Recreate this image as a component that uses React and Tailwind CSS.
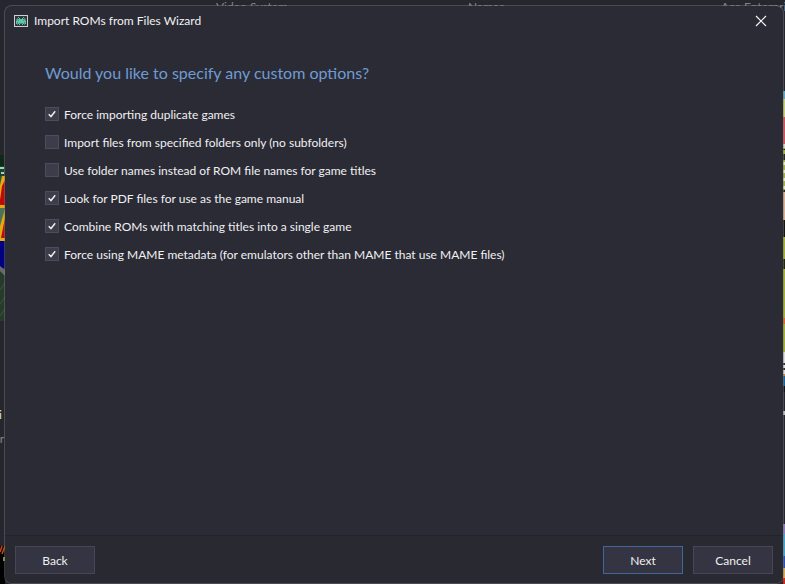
import { useState } from "react";

const OPTIONS = [
  { id: "duplicates", label: "Force importing duplicate games", on: true },
  { id: "folders", label: "Import files from specified folders only (no subfolders)", on: false },
  { id: "titles", label: "Use folder names instead of ROM file names for game titles", on: false },
  { id: "manuals", label: "Look for PDF files for use as the game manual", on: true },
  { id: "combine", label: "Combine ROMs with matching titles into a single game", on: true },
  { id: "mame", label: "Force using MAME metadata (for emulators other than MAME that use MAME files)", on: true },
];

function InvaderIcon() {
  return (
    <svg width="14" height="12" viewBox="0 0 14 12" shapeRendering="crispEdges" aria-hidden="true">
      <rect width="14" height="12" fill="#cfcfd3" />
      <rect x="1" y="1" width="12" height="10" fill="#34343c" />
      <g fill="#5cc8aa">
        <path d="M4 2h1v1h-1zM9 2h1v1h-1zM5 3h1v1h-1zM8 3h1v1h-1zM4 4h6v1h-6zM3 5h1v1h-1zM5 5h4v1h-4zM10 5h1v1h-1zM2 6h10v1h-10zM2 7h1v2h-1zM4 7h6v1h-6zM11 7h1v2h-1zM4 8h1v1h-1zM9 8h1v1h-1zM5 9h1v1h-1zM8 9h1v1h-1z" />
        <path d="M2 4h1v2h-1zM11 4h1v2h-1zM3 3h1v2h-1zM10 3h1v2h-1zM3 7h1v3h-1zM10 7h1v3h-1zM5 8h4v1h-4zM4 5h1v1h-1zM9 5h1v1h-1z" opacity=".6" />
      </g>
    </svg>
  );
}

function LeftArt() {
  return (
    <svg width="5" height="584" viewBox="0 0 5 584" aria-hidden="true">
      <rect y="155" width="5" height="166" fill="#263b2b" />
      <path d="M0 155h5v11h-5z" fill="#10281c" />
      <path d="M0 167h4v2h-4zM1 172h3v2h-3z" fill="#8fe0b8" />
      <path d="M0 176h5v32h-5z" fill="#c00808" />
      <path d="M0 176h5v4l-3 6-2 14z" fill="#e0ac10" />
      <path d="M0 176h2l-2 9z" fill="#35543e" />
      <path d="M0 205h5v3h-5z" fill="#e0ac10" />
      <path d="M0 208h5v33h-5z" fill="#4c7454" />
      <path d="M5 211v30h-5v-10z" fill="#c00808" />
      <path d="M5 209v9l-4 20h-1v-12z" fill="#e0ac10" />
      <path d="M0 238h5v3h-5z" fill="#e0ac10" />
      <path d="M0 241h5v27h-5z" fill="#000080" />
      <path d="M0 266l5 4v6l-5-5z" fill="#69696b" />
      <path d="M0 290l5-7M0 304l5-7M0 316l5-7" stroke="#3c5736" />
      <path d="M0 546h5v38h-5z" fill="#000" />
      <path d="M0 552l2-6M2 554l3-8" stroke="#c84a14" strokeWidth="1.5" />
      <path d="M3 557h2v4h-2z" fill="#8c9030" />
    </svg>
  );
}

function RightArt() {
  return (
    <svg width="2" height="584" viewBox="0 0 2 584" shapeRendering="crispEdges" aria-hidden="true">
      <path d="M0 91h2v8h-2z" fill="#5aa6c4" />
      <path d="M0 99h2v18h-2z" fill="#c3ce70" />
      <path d="M0 117h2v27h-2z" fill="#d0505c" />
      <path d="M0 144h2v4h-2z" fill="#d8d2c0" />
      <path d="M0 148h2v43h-2z" fill="#a2b43c" />
      <path d="M0 154h2v6h-2zM0 149h2v1h-2zM0 190h2v2h-2z" fill="#272b22" />
      <path d="M0 162h2v3h-2zM0 170h2v3h-2zM0 178h2v3h-2zM0 186h2v3h-2z" fill="#e4e6cc" />
      <path d="M0 192h2v28h-2z" fill="#d8b090" />
      <path d="M0 220h2v17h-2z" fill="#15170f" />
      <path d="M0 237h2v115h-2z" fill="#a2b02c" />
      <path d="M0 259h2v10h-2z" fill="#22260e" />
      <path d="M0 318h2v6h-2z" fill="#e06428" />
      <path d="M0 352h2v22h-2z" fill="#dcdcdc" />
      <path d="M0 363h2v2h-2zM0 368h2v2h-2z" fill="#303030" />
      <path d="M0 374h2v2h-2z" fill="#d08030" />
      <path d="M0 376h2v10h-2z" fill="#14639c" />
      <path d="M0 386h2v6h-2z" fill="#101418" />
      <path d="M0 411h2v4h-2z" fill="#b8b8b8" />
      <path d="M0 524h2v10h-2z" fill="#8c78b8" />
      <path d="M0 534h2v22h-2z" fill="#3ca4c8" />
      <path d="M0 556h2v12h-2z" fill="#2850b4" />
      <path d="M0 568h2v10h-2z" fill="#d8a850" />
      <path d="M0 578h2v6h-2z" fill="#d02c1c" />
    </svg>
  );
}

function Library() {
  return (
    <div className="absolute inset-0 overflow-hidden text-xs leading-4 text-[#85858b]" aria-hidden="true">
      <div className="absolute inset-y-0 left-0"><LeftArt /></div>
      <div className="absolute inset-y-0 right-0"><RightArt /></div>
      <span className="absolute -top-px left-[216px]">Video System</span>
      <span className="absolute -top-px left-[468px]">Names</span>
      <span className="absolute -top-px left-[721px] whitespace-nowrap">Ace Enterprise</span>
      <span className="absolute top-[407px] right-full -mr-0.5 text-[#e0e0e0]">i</span>
      <span className="absolute top-[431px] right-full -mr-1">r</span>
    </div>
  );
}

function Option({ option }) {
  const [checked, setChecked] = useState(option.on);
  return (
    <li className="flex h-7 items-center gap-[5px]">
      <span className="grid size-3.5">
        <input
          id={option.id}
          type="checkbox"
          checked={checked}
          onChange={(e) => setChecked(e.target.checked)}
          className="col-start-1 row-start-1 size-3.5 appearance-none border border-[#4c4c5e] bg-[#3c3c4a]"
        />
        {checked && (
          <svg className="pointer-events-none col-start-1 row-start-1" width="14" height="14" viewBox="0 0 14 14" fill="none" aria-hidden="true">
            <path d="M3.7 7.2L6 9.5L10.2 4.2" stroke="#ececee" strokeWidth="1.5" />
          </svg>
        )}
      </span>
      <label htmlFor={option.id} className="pt-0.5">{option.label}</label>
    </li>
  );
}

function WizardButton({ children, primary }) {
  return (
    <button
      type="button"
      className={
        "h-7 w-20 border bg-[#343442] pt-0.5 text-xs " + (primary ? "border-[#40669c]" : "border-[#464658]")
      }
    >
      {children}
    </button>
  );
}

export default function App() {
  return (
    <div className="relative flex h-screen flex-col bg-[#26262e] font-[Lato,'Open_Sans',sans-serif] text-xs text-[#f0f0f2]">
      <Library />
      <main className="relative mt-[5px] mr-px ml-1 flex flex-1 flex-col overflow-hidden rounded-lg border border-[#7a7a7a]/45 bg-[#2b2b35] bg-clip-padding">
        <header className="flex h-[30px] items-center justify-between pr-4 pl-[9px]">
          <div className="flex items-center gap-1.5">
            <InvaderIcon />
            <h1>Import ROMs from Files Wizard</h1>
          </div>
          <button type="button" aria-label="Close">
            <svg width="12" height="12" viewBox="0 0 12 12" aria-hidden="true">
              <path d="M1 1L11 11M11 1L1 11" stroke="#f4f4f4" strokeWidth="1.2" />
            </svg>
          </button>
        </header>
        <section className="flex-1 px-10 pt-[25px]">
          <h2 className="text-base leading-6 text-[#6f9bd4]">Would you like to specify any custom options?</h2>
          <ul className="mt-[15px]">
            {OPTIONS.map((option) => (
              <Option key={option.id} option={option} />
            ))}
          </ul>
        </section>
        <footer className="flex h-12 gap-2.5 border-t border-[#23232b] bg-[#292932] px-2.5 pt-2.5">
          <WizardButton>Back</WizardButton>
          <div className="flex-1" />
          <WizardButton primary>Next</WizardButton>
          <WizardButton>Cancel</WizardButton>
        </footer>
      </main>
    </div>
  );
}
